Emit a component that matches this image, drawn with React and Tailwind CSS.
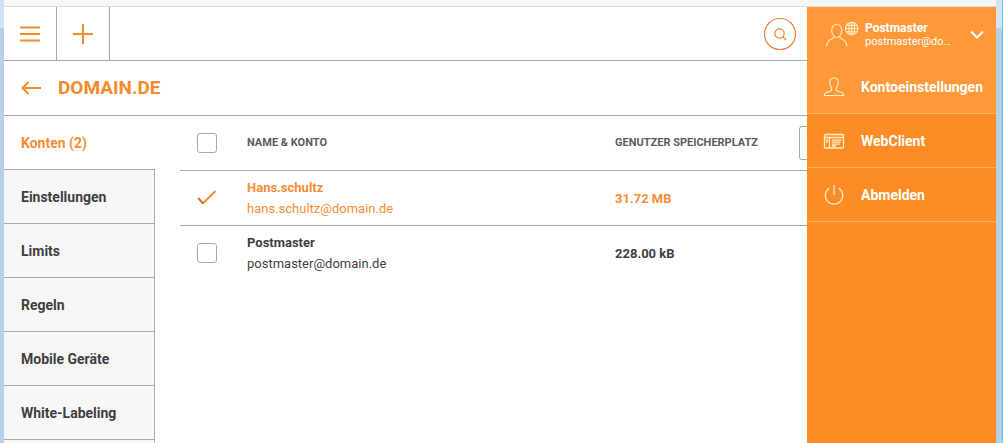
import { useState } from 'react';

const tabs = [
  'Konten (2)',
  'Einstellungen',
  'Limits',
  'Regeln',
  'Mobile Geräte',
  'White-Labeling',
];

const accounts = [
  { name: 'Hans.schultz', email: 'hans.schultz@domain.de', storage: '31.72 MB' },
  { name: 'Postmaster', email: 'postmaster@domain.de', storage: '228.00 kB' },
];

const UserGlobeIcon = () => (
  <svg width="34" height="28" viewBox="0 0 34 28" fill="none" stroke="#ffefc4" strokeWidth="1.1">
    <path d="M11.700 3.500c-3.200 0-5 2.300-5 5.700 0 4.300 2.300 7.300 5 7.300s5-3 5-7.300c0-3.400-1.800-5.700-5-5.700z" />
    <path d="M8.700 15.800c-.2 1.200-1 1.700-2 2.100C3.300 19 1.700 20.800 1.700 25.500M14.700 15.800c.2 1.200 1 1.700 2 2.100 3.400 1.100 5 2.900 5 7.600" />
    <circle cx="26.700" cy="7.500" r="6.200" />
    <ellipse cx="26.700" cy="7.500" rx="2.900" ry="6.200" />
    <path d="M26.700 1.300v12.400M20.500 7.500h12.400M21.600 4.300h10.200M21.600 10.700h10.200" />
  </svg>
);

const PersonIcon = () => (
  <svg width="22" height="20" viewBox="0 0 22 20" fill="none" stroke="#ffefc4" strokeWidth="1.100">
    <path d="M11 1C8 1 6.600 2.800 6.700 5.400c.1 2.800.9 4.200 2 5.300v2c0 .9-.6 1.300-1.600 1.600L3.400 15.600C1.800 16.200 1.200 17 1.200 18.500h19.600c0-1.500-.6-2.300-2.200-2.900l-3.700-1.300c-1-.3-1.600-.7-1.600-1.600v-2c1.100-1.100 1.900-2.500 2-5.300C15.400 2.800 14 1 11 1z" />
  </svg>
);

const WebClientIcon = () => (
  <svg width="22" height="20" viewBox="0 0 22 20" fill="none" stroke="#ffefc4" strokeWidth="1.300">
    <rect x="1.500" y="3.500" width="19" height="13.500" rx="1" />
    <path d="M1.500 6.500h19M6.500 6.500V17M3 9h2M3 11h2M9 9.200h9.500M9 11.200h8.500M9 13.200h7.500M9 15h4" />
  </svg>
);

const PowerIcon = () => (
  <svg width="22" height="20" viewBox="0 0 22 20" fill="none" stroke="#ffefc4" strokeWidth="1.200">
    <path d="M11 0v10M6.200 3.200A8.700 8.700 0 1 0 15.800 3.200" />
  </svg>
);

const menu = [
  { label: 'Kontoeinstellungen', icon: PersonIcon, active: true },
  { label: 'WebClient', icon: WebClientIcon },
  { label: 'Abmelden', icon: PowerIcon },
];

const Checkbox = ({ label, checked, onChange }) => (
  <div className="relative h-5 w-5">
    <input
      type="checkbox"
      aria-label={label}
      checked={checked}
      onChange={onChange}
      className="peer block h-5 w-5 appearance-none rounded-[3px] border border-[#a8a8a8] bg-white checked:border-transparent"
    />
    <svg
      className="pointer-events-none absolute inset-0 hidden peer-checked:block"
      width="20"
      height="20"
      viewBox="0 0 20 20"
      fill="none"
      strokeWidth="1.900"
    >
      <path d="M5.800 15.500L18.500 3" stroke="#f58a2c" />
      <path d="M1.200 10L6.200 15.700" stroke="#dd6420" />
    </svg>
  </div>
);

const Header = () => (
  <header className="flex h-[54px] items-stretch border-b border-[#a9a9a9]">
    <button aria-label="Menü" className="flex w-[53px] items-center justify-center border-r border-[#a9a9a9]">
      <svg width="20" height="18" viewBox="0 0 20 18" stroke="#f58a2c" strokeWidth="2">
        <path d="M0 2.500h20M0 9h20M0 15.500h20" />
      </svg>
    </button>
    <button aria-label="Hinzufügen" className="flex w-[53px] items-center justify-center border-r border-[#a9a9a9]">
      <svg width="20" height="20" viewBox="0 0 20 20" stroke="#f58a2c" strokeWidth="2">
        <path d="M0 10h20M10 0v20" />
      </svg>
    </button>
    <button aria-label="Suchen" className="ml-auto mr-[10px] self-center">
      <svg width="34" height="34" viewBox="0 0 34 34" fill="none" stroke="#f0813a" strokeWidth="1.200">
        <circle cx="17" cy="17" r="15.500" />
        <circle cx="16.500" cy="16.500" r="4.700" />
        <path d="M20 20l3 3" />
      </svg>
    </button>
  </header>
);

const AccountTable = () => {
  const [selected, setSelected] = useState(['Hans.schultz']);

  const toggle = name =>
    setSelected(
      selected.includes(name) ? selected.filter(n => n !== name) : [...selected, name]
    );
  const toggleAll = () =>
    setSelected(selected.length === accounts.length ? [] : accounts.map(a => a.name));

  return (
    <table className="w-full table-fixed border-separate border-spacing-0 text-left">
      <thead>
        <tr className="h-[55px] text-[11px] uppercase text-[#5c5c5c] *:border-b *:border-[#a9a9a9]">
          <th className="w-[67px] pl-[17px]">
            <Checkbox
              label="Alle auswählen"
              checked={selected.length === accounts.length}
              onChange={toggleAll}
            />
          </th>
          <th className="font-bold">Name &amp; Konto</th>
          <th className="w-[184px] font-bold">Genutzer Speicherplatz</th>
          <th className="w-2">
            <button
              aria-label="Spalten"
              className="block h-[34px] w-10 rounded-[3px] border border-[#a8a8a8]"
            ></button>
          </th>
        </tr>
      </thead>
      <tbody>
        {accounts.map(account => (
          <tr
            key={account.name}
            className="h-[55px] text-[13px] leading-[21px] text-[#3f3f3f] *:border-b *:border-[#a9a9a9] last:*:border-transparent has-checked:text-[#fa8d33]"
          >
            <td className="pl-[17px]">
              <Checkbox
                label={account.name}
                checked={selected.includes(account.name)}
                onChange={() => toggle(account.name)}
              />
            </td>
            <td>
              <p className="font-bold">{account.name}</p>
              <p>{account.email}</p>
            </td>
            <td className="font-bold">{account.storage}</td>
            <td></td>
          </tr>
        ))}
      </tbody>
    </table>
  );
};

const UserPanel = () => (
  <aside className="w-[189px] shrink-0 bg-[#fe8c26]">
    <button className="flex h-[53px] w-full items-center bg-[#ff9838] pt-0.5 pl-[18px] pr-3 text-left text-white">
      <UserGlobeIcon />
      <span className="ml-[6px] flex-1">
        <span className="block text-xs leading-[14px] font-bold">Postmaster</span>
        <span className="block w-[86px] truncate text-[11px] leading-[14px]">
          postmaster@domain.de
        </span>
      </span>
      <svg width="14" height="10" viewBox="0 0 14 10" fill="none" stroke="#fff" strokeWidth="2">
        <path d="M1 1.500l6 6 6-6" />
      </svg>
    </button>
    <nav>
      {menu.map(({ label, icon: Icon, active }) => (
        <a
          key={label}
          href="#"
          className={`flex h-[54px] items-center gap-4 border-b border-[#ffae62] pl-4 text-sm font-bold text-white ${
            active ? 'bg-[#ff9838]' : ''
          }`}
        >
          <Icon />
          {label}
        </a>
      ))}
    </nav>
  </aside>
);

const App = () => {
  return (
    <div className="flex min-h-screen bg-white font-[Roboto,sans-serif]">
      <div className="flex w-1 shrink-0 flex-col">
        <div className="h-7 bg-[#cfe3f5]"></div>
        <div className="flex-1 bg-[#b9cdec]"></div>
      </div>
      <div className="flex min-w-0 flex-1 flex-col">
        <div className="h-[7px] border-b border-[#dcdcdc] bg-[#f7f7f7]"></div>
        <div className="flex flex-1">
          <div className="flex min-w-0 flex-1 flex-col overflow-hidden">
            <Header />
            <div className="flex h-[55px] items-center gap-4 border-b border-[#a9a9a9] pl-[17px] text-[#f58a2c]">
              <button aria-label="Zurück">
                <svg width="21" height="14" viewBox="0 0 21 14" fill="none" stroke="#f58a2c" strokeWidth="1.800">
                  <path d="M20 7H1.500M7.500 1L1.500 7l6 6" />
                </svg>
              </button>
              <h1 className="text-[19px] font-bold">DOMAIN.DE</h1>
            </div>
            <div className="flex flex-1">
              <nav className="flex w-[151px] shrink-0 flex-col">
                {tabs.map((tab, i) => (
                  <a
                    key={tab}
                    href="#"
                    className={`flex h-[54px] items-center border-b border-[#a9a9a9] pl-[17px] text-sm font-bold ${
                      i === 0 ? 'text-[#fa8d33]' : 'border-r bg-[#f7f7f7] text-[#3f3f3f]'
                    }`}
                  >
                    {tab}
                  </a>
                ))}
                <div className="flex-1 border-r border-[#a9a9a9] bg-[#f7f7f7]"></div>
              </nav>
              <main className="min-w-0 flex-1 pl-[25px]">
                <AccountTable />
              </main>
            </div>
          </div>
          <UserPanel />
        </div>
      </div>
      <div className="flex w-[7px] shrink-0 flex-col border-r border-[#55c8f0]">
        <div className="h-7 bg-[#d3e3f1]"></div>
        <div className="flex-1 bg-[#b7d0e4]"></div>
      </div>
    </div>
  );
};

export default App;
